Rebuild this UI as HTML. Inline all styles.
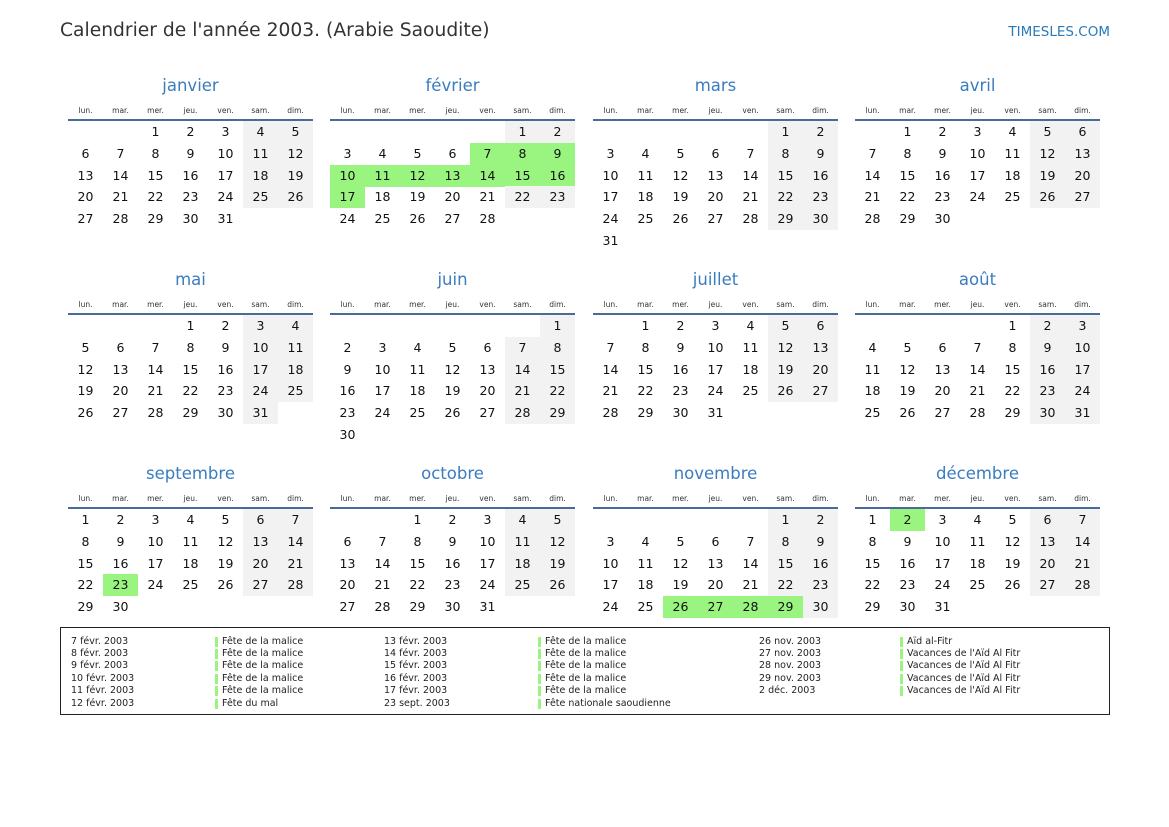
<!DOCTYPE html>
<html><head><meta charset="utf-8"><style>
body{margin:0;width:1169px;height:827px;background:#fff;font-family:"DejaVu Sans","Liberation Sans",sans-serif;position:relative;overflow:hidden;color:#111}
.a{position:absolute;white-space:nowrap}
.t{left:60px;top:20px;font-size:18.7px;color:#333}
.s{right:59px;top:24px;font-size:13.5px;color:#2a7ab8}
.mt{font-size:16.5px;color:#3a7cc0;text-align:center;width:245px}
.wd{font-size:7.5px;color:#333;width:35px;text-align:center}
.ln{height:2px;background:#4a6a9a;width:245px}
.c{width:35px;height:22px;line-height:22px;text-align:center;font-size:12.5px}
.g{background:#f2f2f2}.h{background:#99f57f}
.box{left:60px;top:627px;width:1048px;height:86px;border:1px solid #222}
.lg{font-size:9.5px;color:#222}
.bar{width:3px;height:10px;background:#99f57f}
</style></head><body>
<div class="a t">Calendrier de l'année 2003. (Arabie Saoudite)</div>
<div class="a s">TIMESLES.COM</div>
<div class="a box"></div>
<div id="r"></div>
<script>
var names=["janvier","février","mars","avril","mai","juin","juillet","août","septembre","octobre","novembre","décembre"];
var off=[2,5,5,1,3,6,1,4,0,2,5,0],len=[31,28,31,30,31,30,31,31,30,31,30,31];
var wds=["lun.","mar.","mer.","jeu.","ven.","sam.","dim."];
var cx=[68,330,593,855],ly=[120,314,508];
var hol={1:[7,8,9,10,11,12,13,14,15,16,17],8:[23],10:[26,27,28,29],11:[2]};
var h="";
for(var m=0;m<12;m++){var x=cx[m%4],y=ly[Math.floor(m/4)];
h+='<div class="a mt" style="left:'+x+'px;top:'+(y-44)+'px">'+names[m]+'</div>';
for(var i=0;i<7;i++)h+='<div class="a wd" style="left:'+(x+i*35)+'px;top:'+(y-14)+'px">'+wds[i]+'</div>';
h+='<div class="a ln" style="left:'+x+'px;top:'+(y-1)+'px"></div>';
for(var d=1;d<=len[m];d++){var p=off[m]+d-1,col=p%7,row=Math.floor(p/7);
var cl="c";if(hol[m]&&hol[m].indexOf(d)>=0)cl+=" h";else if(col>=5)cl+=" g";
h+='<div class="a '+cl+'" style="left:'+(x+col*35)+'px;top:'+(y+1+row*21.8).toFixed(1)+'px">'+d+'</div>';}}
var L=[[71,215,["7 févr. 2003","8 févr. 2003","9 févr. 2003","10 févr. 2003","11 févr. 2003","12 févr. 2003"],["Fête de la malice","Fête de la malice","Fête de la malice","Fête de la malice","Fête de la malice","Fête du mal"]],
[384,538,["13 févr. 2003","14 févr. 2003","15 févr. 2003","16 févr. 2003","17 févr. 2003","23 sept. 2003"],["Fête de la malice","Fête de la malice","Fête de la malice","Fête de la malice","Fête de la malice","Fête nationale saoudienne"]],
[759,900,["26 nov. 2003","27 nov. 2003","28 nov. 2003","29 nov. 2003","2 déc. 2003"],["Aïd al-Fitr","Vacances de l'Aïd Al Fitr","Vacances de l'Aïd Al Fitr","Vacances de l'Aïd Al Fitr","Vacances de l'Aïd Al Fitr"]]];
L.forEach(function(c){for(var i=0;i<c[2].length;i++){var y=635.5+i*12.4;
h+='<div class="a lg" style="left:'+c[0]+'px;top:'+y.toFixed(1)+'px">'+c[2][i]+'</div>';
h+='<div class="a bar" style="left:'+c[1]+'px;top:'+(y+1).toFixed(1)+'px"></div>';
h+='<div class="a lg" style="left:'+(c[1]+7)+'px;top:'+y.toFixed(1)+'px">'+c[3][i]+'</div>';}});
document.getElementById("r").innerHTML=h;
</script>
</body></html>
